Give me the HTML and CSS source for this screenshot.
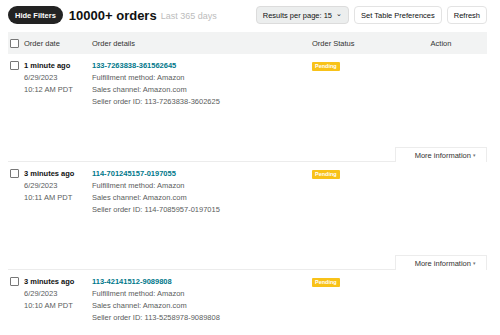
FILE: index.html
```html
<!DOCTYPE html>
<html lang="en">
<head>
  <meta charset="UTF-8">
  <meta name="viewport" content="width=device-width, initial-scale=1.0">
  <title>Manage Orders</title>
  <link rel="stylesheet" href="styles.css">
</head>
<body>
  <div class="page">
    <div class="toolbar">
      <button class="btn-dark">Hide Filters</button>
      <h1>10000+ orders</h1>
      <span class="range">Last 365 days</span>
      <div class="tools">
        <button class="btn btn-grey">Results per page: 15 <span class="chev">&#8964;</span></button>
        <button class="btn">Set Table Preferences</button>
        <button class="btn">Refresh</button>
      </div>
    </div>

    <div class="orders">
      <div class="row head">
        <div class="col-date"><span class="box"></span>Order date</div>
        <div>Order details</div>
        <div>Order Status</div>
        <div class="col-action">Action</div>
      </div>

      <div class="row order">
        <div class="col-date">
          <span class="box"></span>
          <div>
            <div class="ago">1 minute ago</div>
            <div>6/29/2023</div>
            <div>10:12 AM PDT</div>
          </div>
        </div>
        <div>
          <a href="#" class="order-id">133-7263838-361562645</a>
          <div>Fulfillment method: Amazon</div>
          <div>Sales channel: Amazon.com</div>
          <div>Seller order ID: 113-7263838-3602625</div>
        </div>
        <div><span class="badge">Pending</span></div>
        <div class="col-action"><button class="more">More information <span class="caret">&#9662;</span></button></div>
      </div>

      <div class="row order">
        <div class="col-date">
          <span class="box"></span>
          <div>
            <div class="ago">3 minutes ago</div>
            <div>6/29/2023</div>
            <div>10:11 AM PDT</div>
          </div>
        </div>
        <div>
          <a href="#" class="order-id">114-701245157-0197055</a>
          <div>Fulfillment method: Amazon</div>
          <div>Sales channel: Amazon.com</div>
          <div>Seller order ID: 114-7085957-0197015</div>
        </div>
        <div><span class="badge">Pending</span></div>
        <div class="col-action"><button class="more">More information <span class="caret">&#9662;</span></button></div>
      </div>

      <div class="row order">
        <div class="col-date">
          <span class="box"></span>
          <div>
            <div class="ago">3 minutes ago</div>
            <div>6/29/2023</div>
            <div>10:10 AM PDT</div>
          </div>
        </div>
        <div>
          <a href="#" class="order-id">113-42141512-9089808</a>
          <div>Fulfillment method: Amazon</div>
          <div>Sales channel: Amazon.com</div>
          <div>Seller order ID: 113-5258978-9089808</div>
        </div>
        <div><span class="badge">Pending</span></div>
        <div class="col-action"></div>
      </div>
    </div>
  </div>
</body>
</html>
```

FILE: styles.css
```css
body {
  margin: 0;
  font-family: "Liberation Sans", Arial, sans-serif;
  background: #fff;
  color: #5a5d5d;
}
.page {
  width: 479px;
  padding: 6px 0 0 8px;
}
.toolbar {
  display: flex;
  align-items: center;
  height: 18px;
}
.btn-dark {
  background: #232323;
  color: #fff;
  border: none;
  border-radius: 9px;
  height: 18px;
  padding: 0 7px;
  font-family: inherit;
  font-size: 7.5px;
  font-weight: bold;
}
h1 {
  margin: 0 0 0 6px;
  font-size: 13px;
  color: #0f1111;
}
.range {
  margin-left: 4px;
  font-size: 9px;
  color: #bcbcbc;
  padding-top: 2px;
}
.tools {
  margin-left: auto;
  display: flex;
  gap: 5px;
}
.btn {
  height: 18px;
  padding: 0 6px;
  background: #fff;
  border: 1px solid #e3e3e3;
  border-radius: 4px;
  font-family: inherit;
  font-size: 7.5px;
  color: #0f1111;
}
.btn-grey {
  background: #eceeee;
  border-color: #dcdcdc;
}
.chev {
  font-size: 7px;
  margin-left: 2px;
  position: relative;
  top: -2px;
}
.orders {
  margin-top: 8px;
}
.row {
  display: grid;
  grid-template-columns: 84px 220px 83px 1fr;
  font-size: 7.5px;
}
.head {
  height: 22px;
  align-items: center;
  background: #f2f3f3;
  color: #333;
}
.col-date {
  display: flex;
  gap: 5px;
  padding-left: 2px;
}
.head .col-date {
  align-items: center;
}
.col-action {
  text-align: center;
}
.box {
  width: 7px;
  height: 7px;
  border: 1px solid #777;
  border-radius: 1px;
  flex: none;
  background: #fff;
}
.order {
  height: 108px;
  box-sizing: border-box;
  padding-top: 6px;
  border-bottom: 1px solid #ececec;
  line-height: 12px;
}
.order .box {
  margin-top: 1px;
}
.ago {
  font-weight: bold;
  color: #0f1111;
}
.order-id {
  color: #00778a;
  font-weight: bold;
  text-decoration: none;
}
.badge {
  display: inline-block;
  background: #f8c219;
  color: #fff;
  font-size: 5.5px;
  font-weight: bold;
  line-height: 9px;
  padding: 0 3px;
  border-radius: 1px;
  margin-top: 2px;
  vertical-align: top;
}
.order .col-action {
  display: flex;
  align-items: flex-end;
  margin-bottom: -1px;
}
.more {
  width: 100%;
  height: 15px;
  background: #fff;
  border: 1px solid #ececec;
  border-bottom: none;
  font-family: inherit;
  font-size: 7.5px;
  color: #333;
  text-align: right;
  padding: 0 10px 0 0;
}
.caret {
  font-size: 5px;
  color: #777;
  vertical-align: 1px;
}
```
